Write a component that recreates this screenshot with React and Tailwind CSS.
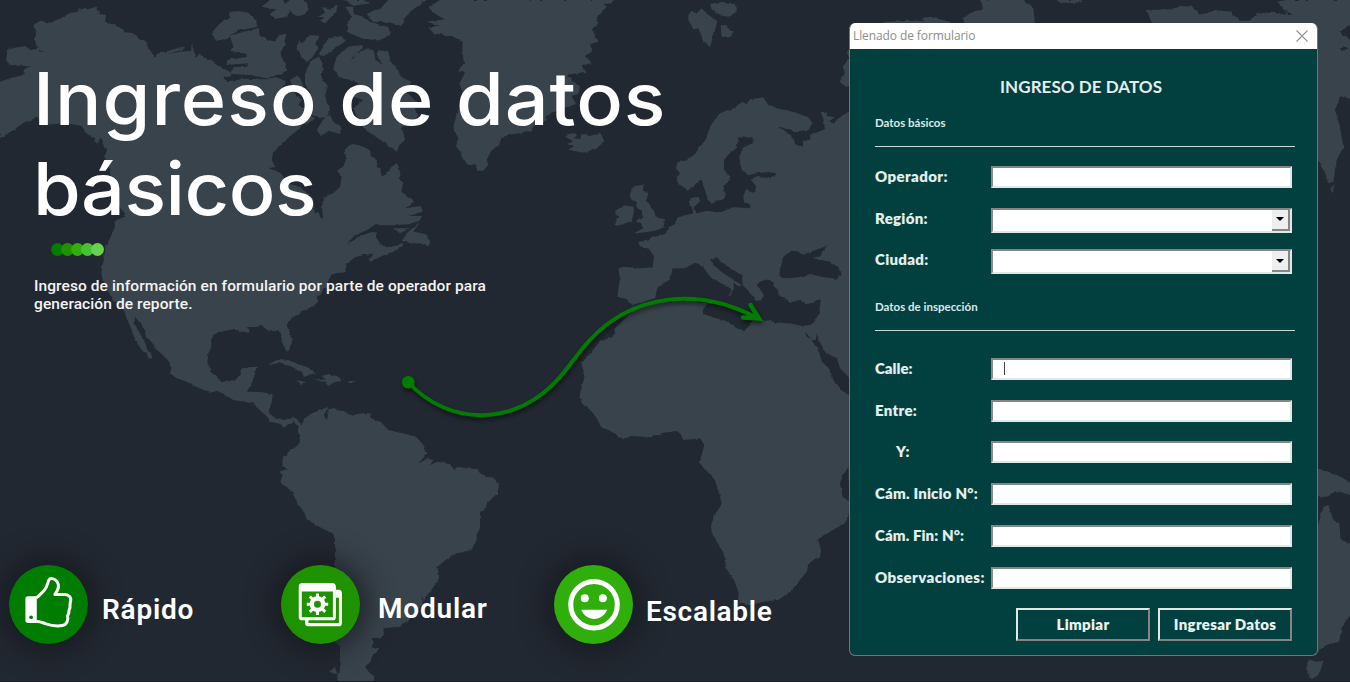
import React from "react";

const LAND = [
  // North and Central America
  "M0 245L30 235 70 225 72 205 95 200 60 196 30 195 18 180 22 160 20 150 50 142 80 138 90 150 115 146 118 155 133 155 112 148 105 120 108 100 103 75 120 62 150 68 180 56 200 45 207 40 235 35 236 25 262 28 290 20 291 32 300 33 298 42 318 45 315 65 345 76 360 85 375 97 400 100 418 118 435 125 448 148 465 172 478 160 550 140 555 147 500 163 540 155 574 152 575 131 583 158 590 172 600 160 604 170 635 180 640 190 690 215 694 228 670 234 680 244 740 236 790 238 830 232 858 246 850 262 880 275 905 300 895 315 925 335 945 360 905 375 900 385 878 402 848 428 840 438 820 455 815 480 826 500 806 505 845 520 860 550 900 560 928 585 940 600 944 640 955 636 963 655 969 655 966 620 970 590 1000 580 1020 560 1024 535 1012 512 1035 492 1038 470 1034 450 1048 436 1060 432 1090 440 1110 450 1112 468 1130 478 1132 500 1142 512 1145 530 1160 520 1175 500 1192 488 1200 515 1196 535 1210 545 1204 575 1225 590 1240 600 1245 605 1215 625 1262 618 1268 635 1225 648 1266 648 1258 662 1230 672 1185 676 1125 676 1100 690 1062 708 1040 735 1080 708 1115 696 1140 698 1130 715 1140 730 1160 742 1185 738 1210 728 1208 738 1180 755 1152 765 1112 785 1105 778 1125 760 1090 765 1065 772 1042 790 1036 810 1040 816 1010 820 990 825 984 845 985 862 970 865 965 880 950 890 955 905 940 918 905 934 880 952 864 965 862 980 870 1000 876 1030 866 1052 858 1050 845 1025 843 1000 832 990 810 995 785 978 770 980 740 982 750 995 720 995 700 988 660 995 640 1005 634 1020 634 1040 625 1060 622 1085 632 1115 650 1130 665 1147 690 1140 706 1143 718 1125 724 1105 745 1102 774 1100 764 1115 762 1130 755 1150 740 1175 780 1176 818 1183 815 1205 806 1235 820 1250 850 1260 880 1254 895 1262 903 1278 895 1283 880 1262 850 1283 842 1272 810 1265 806 1255 782 1232 760 1210 700 1200 655 1172 630 1178 592 1162 560 1145 530 1135 508 1118 515 1105 505 1082 485 1062 465 1045 462 1035 440 1010 425 975 405 950 403 970 420 1000 436 1030 442 1050 460 1072 454 1078 425 1050 405 1020 395 990 378 950 372 930 340 905 328 880 312 850 305 800 312 780 316 740 330 715 345 680 343 662 375 650 376 642 340 600 345 560 330 520 322 490 312 470 322 450 308 432 305 410 290 432 282 412 265 405 245 378 200 370 130 374 115 352 75 366 40 390 0 415Z",
  // Arctic archipelago
  "M638 95L660 70 690 50 692 35 715 33 745 38 768 62 772 80 710 92 680 118 645 122Z",
  "M690 108L730 95 775 85 780 108 800 118 825 125 838 104 858 105 855 135 838 160 850 180 862 212 840 222 800 235 750 225 690 222 700 202 740 200 745 190 680 195 682 178 740 172 740 162 690 152 700 140Z",
  "M785 20L810 0 850 0 855 12 870 0 910 0 928 20 915 42 890 50 870 30 860 52 830 55 808 45 830 28Z",
  "M950 50L975 38 970 20 990 30 1010 15 1005 40 975 70 960 62 975 52Z",
  "M1030 0L1090 0 1110 10 1060 18Z",
  "M1100 42L1125 30 1140 28 1165 0 1280 0 1240 28 1215 48 1205 78 1165 66 1120 66Z",
  "M1035 20L1060 20 1060 42 1090 50 1110 65 1165 82 1172 105 1135 122 1085 115 1040 95 1042 72 1055 50Z",
  "M890 140L895 120 908 128 930 105 960 108 945 130 955 145 935 175 920 185 905 172Z",
  "M955 165L985 115 1020 108 1038 122 1005 145 975 168Z",
  "M915 225L930 185 955 170 968 190 965 240 985 255 975 290 990 330 975 355 935 345 930 280 915 250Z",
  "M870 240L895 225 910 255 880 268Z",
  "M1000 205L1010 170 1045 140 1085 135 1090 143 1060 165 1050 190 1066 160 1100 148 1120 150 1128 180 1150 195 1132 170 1135 150 1165 155 1172 185 1190 205 1210 235 1235 245 1215 275 1250 305 1245 330 1255 345 1232 375 1205 380 1215 420 1195 438 1192 456 1130 412 1100 392 1075 360 1060 325 1090 300 1060 290 1085 265 1060 240 1020 235Z",
  "M950 390L975 350 990 345 1000 365 1025 385 1020 402 985 392 962 408Z",
  // Newfoundland
  "M1208 722L1220 700 1260 665 1240 695 1275 702 1290 725 1288 740 1260 730 1240 732Z",
  "M1180 685L1230 685 1200 700Z",
  // Greenland
  "M1285 25L1320 0 1838 0 1835 10 1810 12 1820 20 1790 50 1795 70 1778 85 1782 100 1795 125 1770 132 1776 155 1755 165 1775 190 1742 195 1760 215 1700 225 1740 262 1735 282 1715 288 1728 312 1690 325 1640 345 1640 360 1600 380 1590 395 1540 402 1505 412 1498 435 1475 450 1460 480 1465 495 1450 512 1432 512 1425 492 1410 495 1388 480 1380 450 1368 440 1375 415 1360 385 1365 360 1375 320 1392 290 1378 250 1395 220 1375 210 1392 190 1387 150 1388 125 1355 108 1300 100 1285 82 1320 78 1280 65 1335 58 1300 40Z",
  "M1200 0L1270 0 1240 20 1222 48 1200 65Z",
  // Iceland
  "M1695 410L1705 398 1730 402 1722 415 1740 418 1745 402 1770 408 1790 402 1800 398 1808 412 1812 425 1790 445 1752 460 1725 452 1705 450 1722 438 1700 432 1722 424Z",
  // Svalbard
  "M2065 45L2075 32 2090 40 2105 25 2125 45 2152 62 2145 90 2130 142 2110 120 2095 85 2080 88 2065 60Z",
  "M2130 12L2165 5 2205 12 2208 35 2185 50 2155 45 2135 28Z",
  "M2162 75L2178 78 2198 98 2190 112 2165 110Z",
  // Ireland and Great Britain
  "M1842 672L1855 655 1845 632 1875 616 1900 620 1902 635 1895 662 1870 672 1850 678Z",
  "M1888 582L1900 560 1932 553 1928 572 1945 575 1938 602 1950 615 1962 632 1968 652 1995 658 1990 682 1965 692 1912 700 1902 700 1930 685 1922 668 1908 665 1928 652 1925 632 1905 620 1910 605 1895 600Z",
  // Eurasia and Africa
  "M2560 325L2545 335 2510 360 2505 372 2485 365 2505 352 2480 348 2480 335 2462 336 2470 355 2475 388 2430 405 2432 418 2405 425 2410 440 2385 432 2380 415 2370 405 2335 378 2380 395 2425 390 2437 370 2425 352 2380 335 2330 325 2300 310 2290 292 2250 298 2240 312 2225 306 2205 322 2160 340 2145 358 2130 380 2118 418 2100 440 2085 462 2060 480 2032 488 2028 505 2040 520 2030 530 2035 552 2065 570 2085 558 2100 538 2112 560 2120 590 2135 612 2145 602 2168 600 2175 580 2170 558 2192 540 2190 525 2172 512 2172 480 2188 460 2210 445 2215 412 2258 412 2258 428 2230 445 2218 470 2225 510 2245 525 2280 518 2312 515 2328 522 2310 534 2265 530 2252 540 2268 558 2265 580 2238 570 2230 588 2232 605 2252 615 2250 625 2200 622 2160 638 2120 632 2092 640 2080 625 2100 602 2095 590 2072 595 2068 612 2080 640 2035 652 2025 672 2010 680 1998 700 1975 708 1955 710 1945 722 1915 725 1918 738 1945 745 1962 768 1958 802 1920 805 1870 800 1855 806 1860 835 1852 890 1880 898 1895 912 1900 930 1865 965 1845 985 1838 1012 1800 1022 1775 1055 1745 1088 1753 1130 1738 1190 1750 1215 1772 1230 1790 1255 1805 1282 1830 1292 1870 1318 1895 1308 1950 1312 1990 1298 2030 1293 2042 1302 2050 1320 2100 1315 2113 1335 2105 1365 2098 1385 2120 1412 2145 1440 2150 1460 2158 1482 2165 1510 2145 1545 2133 1575 2135 1597 2160 1640 2172 1665 2178 1705 2205 1745 2217 1780 2212 1795 2228 1812 2250 1815 2290 1805 2335 1800 2370 1775 2420 1715 2425 1690 2460 1672 2462 1650 2455 1618 2490 1595 2535 1570 2545 1540 2560 1500Z",
  "M2560 140L2540 155 2548 175 2528 200 2535 220 2518 245 2535 258 2560 268Z",
  // South America
  "M895 1275L905 1275 915 1255 935 1240 970 1228 985 1220 972 1245 980 1262 985 1240 982 1225 1000 1222 1015 1232 1030 1232 1050 1245 1090 1240 1115 1240 1108 1252 1130 1262 1145 1268 1165 1290 1200 1298 1230 1305 1255 1315 1270 1335 1282 1360 1255 1390 1285 1376 1300 1380 1290 1395 1312 1385 1350 1392 1362 1410 1370 1402 1430 1408 1450 1425 1485 1437 1497 1458 1492 1480 1465 1505 1450 1532 1440 1535 1440 1580 1430 1605 1430 1620 1415 1650 1370 1660 1340 1678 1312 1700 1318 1730 1300 1762 1270 1800 1265 1785 1268 1810 1240 1848 1200 1880 1150 1885 1152 1900 1145 1912 1115 1915 1120 1940 1138 1945 1115 1970 1112 1985 1095 2000 1108 2018 1125 2030 1120 2046 1010 2046 1020 2010 1020 1940 1002 1922 1010 1860 1004 1700 1005 1620 1000 1602 960 1582 920 1558 912 1535 895 1515 878 1480 860 1460 840 1450 848 1425 838 1415 862 1408 845 1395 850 1368 860 1365 870 1350 895 1335 900 1320 895 1300Z",
  // Caribbean
  "M802 1095L830 1080 860 1078 900 1095 925 1102 948 1122 912 1130 905 1115 870 1098 840 1090Z",
  "M965 1128L985 1122 1010 1128 1028 1140 1000 1148 985 1158 975 1145 945 1142 975 1138Z",
  "M888 1142L905 1142 918 1146 903 1152Z",
  "M1043 1142L1068 1144 1060 1150 1045 1148Z",
  "M988 2015L1005 2000 1012 2025Z",
  // Siberian coast above the form
  "M2890 55L2910 40 2950 25 2940 0 3070 0 3100 25 3105 75 3080 85 2890 85Z",
  "M2650 66L2720 62 2852 66 2852 90 2650 90Z",
  "M2765 55L2790 50 2850 66 2840 80 2790 80Z",
  "M3170 0L3250 0 3230 8 3180 8Z",
  "M3440 30L3520 28 3540 18 3580 20 3600 45 3650 30 3690 35 3720 62 3750 62 3770 42 3820 35 3860 45 3850 28 3830 5 3860 0 4070 0 4070 65 4020 95 4050 120 4070 300 4020 290 4005 330 4020 380 4030 440 4010 480 4000 545 3985 550 3975 520 3958 490 3950 470 3940 300 3940 80 3460 80Z",
  "M3990 570L4005 550 3995 580Z",
  // Australia and New Guinea
  "M3950 1405L4000 1420 4030 1435 4070 1460 4070 1492 4020 1475 3995 1480 3980 1492 3950 1488 3940 1440Z",
  "M3950 1590L3970 1520 3985 1515 4000 1560 4018 1570 4022 1620 4070 1635 4070 1820 4025 1880 4018 1925 3980 1935 3950 1955 3940 1955Z",
  "M3922 1978L3950 1985 3972 1982 3955 2025 3935 2038 3922 2020Z",
];

const WATER = [
  // Mediterranean and Adriatic
  "M1895 915L1930 905 1965 895 1972 865 2010 838 2018 805 2055 805 2085 788 2105 795 2130 830 2160 848 2185 860 2195 872 2185 885 2190 888 2202 865 2200 848 2220 860 2225 855 2170 820 2140 795 2130 778 2150 770 2165 788 2200 810 2225 825 2228 852 2245 872 2255 885 2265 900 2282 902 2292 885 2278 865 2270 850 2300 838 2322 845 2320 858 2335 870 2335 885 2350 895 2370 908 2400 900 2420 910 2462 898 2458 935 2445 965 2430 975 2405 978 2370 970 2330 968 2285 958 2262 958 2235 992 2210 985 2185 965 2150 955 2110 942 2108 930 2122 912 2090 905 1990 905 1900 925Z",
  // Black Sea
  "M2338 822L2342 800 2350 770 2375 752 2395 755 2408 765 2440 752 2480 738 2462 765 2440 775 2490 785 2520 805 2525 825 2510 836 2470 832 2430 822 2395 832 2350 836Z",
  // Red Sea
  "M2435 1020L2455 1020 2480 1060 2510 1075 2520 1105 2550 1135 2550 1190 2530 1175 2500 1140 2490 1108 2465 1085 2462 1065Z",
  "M2415 995L2435 1018 2420 1010ZM2450 1000L2455 1020 2447 1020Z",
  "M2545 1400L2530 1425 2520 1448 2528 1490 2548 1505Z",
  // Gulf of Saint Lawrence
  "M1130 690L1160 690 1180 705 1170 735 1150 738 1132 718Z",
  // Inlets at the east edge
  "M4020 145L4040 140 4042 150 4025 152ZM3850 28L3880 45 3865 45Z",
];

function WorldMap() {
  return (
    <svg className="absolute inset-0 h-[682px] w-[1350px]" viewBox="0 0 4050 2046" aria-hidden="true">
      <defs>
        <filter
          id="coast"
          filterUnits="userSpaceOnUse"
          x="-30"
          y="-30"
          width="4110"
          height="2106"
          colorInterpolationFilters="sRGB"
        >
          <feTurbulence type="fractalNoise" baseFrequency="0.06" numOctaves="2" seed="4" />
          <feDisplacementMap in="SourceGraphic" scale="9" xChannelSelector="R" yChannelSelector="G" />
          <feGaussianBlur stdDeviation="1.1" />
        </filter>
      </defs>
      <g filter="url(#coast)">
        {LAND.map((d) => (
          <path key={d} d={d} fill="#39434b" />
        ))}
        {WATER.map((d) => (
          <path key={d} d={d} fill="#222831" />
        ))}
      </g>
    </svg>
  );
}

function RouteArrow() {
  return (
    <svg
      className="absolute left-[390px] top-[285px] h-[145px] w-[385px] drop-shadow-[1px_3px_2px_rgba(0,0,0,0.5)]"
      viewBox="390 285 385 145"
      fill="none"
      stroke="#007c00"
      strokeWidth="4"
      aria-hidden="true"
    >
      <circle cx="408.3" cy="382.3" r="6.3" fill="#007c00" stroke="none" />
      <path d="M408 382C450 428 518 426 560 377C571 364 579 352 589 341C632 294 698 286 757 318" />
      <path d="M750.500 305L759 318.500L743 317.500" strokeLinecap="round" strokeWidth="4.500" />
    </svg>
  );
}

function ThumbIcon() {
  return (
    <svg className="h-[79px] w-[79px]" viewBox="0 0 236 236" fill="none" aria-hidden="true">
      <path d="M57 93H83V173H57Q49 173 49 165V101Q49 93 57 93Z" fill="#fff" />
      <circle cx="66" cy="156" r="5.500" fill="#007c00" />
      <path
        d="M82 98C92 91 98 83 104 77C115 65 115 55 119 45C123 37 136 40 144 50C152 62 147 75 137 88H163C178 87 187 97 184 108C182 114 183 117 182 120C184 127 181 132 179 136C180 143 177 147 175 152C178 163 173 180 159 181C147 183 125 181 108 175C97 171 91 168 82 169"
        stroke="#fff"
        strokeWidth="9"
        strokeLinejoin="round"
      />
    </svg>
  );
}

function ModulesIcon() {
  return (
    <svg className="h-[79px] w-[79px]" viewBox="0 0 236 236" fill="none" aria-hidden="true">
      <path d="M164 74H172Q182 74 182 84V173Q182 183 172 183H82Q72 183 72 173V164H82V173H173V98H164Z" fill="#fff" />
      <path
        fillRule="evenodd"
        d="M64 54H153Q164 54 164 65V155Q164 165 154 165H63Q53 165 53 155V65Q53 54 64 54ZM62 79V156H155V79Z"
        fill="#fff"
      />
      <g stroke="#fff" strokeWidth="9">
        <path d="M109 85V100M109 134V149M77 117H92M126 117H141M86 94L97 105M121 129L132 140M132 94L121 105M97 129L86 140" />
        <circle cx="109" cy="117" r="17" strokeWidth="13" />
      </g>
    </svg>
  );
}

function SmileIcon() {
  return (
    <svg className="h-[79px] w-[79px]" viewBox="0 0 236 236" fill="none" aria-hidden="true">
      <circle cx="119.500" cy="118.500" r="69.500" stroke="#fff" strokeWidth="15" />
      <circle cx="92" cy="99.500" r="12" fill="#fff" />
      <circle cx="146" cy="99.500" r="12" fill="#fff" />
      <path d="M81 134H159C151 152 137 161 120 161S89 152 81 134Z" fill="#fff" />
    </svg>
  );
}

function Feature({ icon, color, label, labelClass, className }) {
  return (
    <div className={`flex shrink-0 ${className}`}>
      <div className={`h-[79px] w-[79px] shrink-0 rounded-full shadow-[0_0_26px_9px_rgba(18,18,26,0.6)] ${color}`}>{icon}</div>
      <span className={`font-['Roboto'] text-[28px] font-semibold leading-[33px] text-white ${labelClass}`}>{label}</span>
    </div>
  );
}

const FIELD = "w-[301px] border-2 border-b-[#dfe9e6] border-l-[#8b8b8b] border-r-[#dfe9e6] border-t-[#858585] bg-white";
const LABEL = "w-[116px] shrink-0 whitespace-pre font-['Lato'] text-[15px] font-extrabold leading-[21px] text-[#e4eeec]";

function TextRow({ label, labelClass, caret }) {
  return (
    <div className="flex h-[41.7px]">
      <div className={`${LABEL} ${labelClass}`}>{label}</div>
      <div className={`h-[22px] ${FIELD}`}>{caret && <div className="ml-[11px] mt-[2px] h-[13px] w-px bg-[#444]" />}</div>
    </div>
  );
}

function SelectRow({ label, labelClass }) {
  return (
    <div className="flex h-[41.7px]">
      <div className={`${LABEL} ${labelClass}`}>{label}</div>
      <div className={`flex h-[25px] justify-end ${FIELD}`}>
        <div className="flex h-[21px] w-[18px] items-center justify-center border-b-2 border-r-2 border-[#858585] bg-[#eee]">
          <svg className="h-[4px] w-[8px]" viewBox="0 0 8 4" aria-hidden="true">
            <path d="M0 0H8L4 4Z" fill="#000" />
          </svg>
        </div>
      </div>
    </div>
  );
}

function SectionTitle({ children, className }) {
  return (
    <div className={`w-[420px] border-b border-[#c9d9d7] font-['Lato'] text-[11.5px] font-bold leading-4 text-[#dce8e6] ${className}`}>
      {children}
    </div>
  );
}

const BUTTON =
  "h-[33px] border-2 border-b-[#858585] border-l-[#dfe9e6] border-r-[#858585] border-t-[#dfe9e6] font-['Lato'] text-[15px] font-extrabold text-[#e9f2f0]";

function FormWindow() {
  return (
    <section className="flex h-[633px] w-[469px] flex-col overflow-hidden rounded-[6px] border border-t-0 border-[#6d7678] bg-[#024040]">
      <header className="flex h-[26px] shrink-0 items-center justify-between bg-white pl-[3px] pr-[9px]">
        <span className="font-['Open_Sans'] text-[12px] tracking-[-0.1px] text-[#8d8d8d]">Llenado de formulario</span>
        <svg className="h-[12px] w-[12px]" viewBox="0 0 12 12" stroke="#929292" strokeWidth="1.100" aria-hidden="true">
          <path d="M.5.5L11.500 11.500M11.500.5L.5 11.500" />
        </svg>
      </header>
      <div className="flex flex-col pl-[25px]">
        <h2 className="mt-[27px] self-start pl-[125px] font-['Lato'] text-[17px] font-bold leading-[22px] tracking-[0.05px] text-[#e4eeec]">INGRESO DE DATOS</h2>
        <SectionTitle className="mt-[17px] h-[32px]">Datos básicos</SectionTitle>
        <div className="mt-[19px]">
          <TextRow label="Operador:" labelClass="tracking-[0.4px]" />
          <SelectRow label="Región:" labelClass="tracking-[0.3px]" />
          <SelectRow label="Ciudad:" labelClass="tracking-[0.3px]" />
        </div>
        <SectionTitle className="mt-[8px] h-[32px]">Datos de inspección</SectionTitle>
        <div className="mt-[27px]">
          <TextRow label="Calle:" labelClass="tracking-[0px]" caret />
          <TextRow label="Entre:" labelClass="tracking-[0.3px]" />
          <TextRow label="Y:" labelClass="pl-[21px]" />
          <TextRow label="Cám. Inicio N°:" labelClass="tracking-[0.2px]" />
          <TextRow label="Cám. Fin: N°:" labelClass="tracking-[0.1px]" />
          <TextRow label="Observaciones:" labelClass="tracking-[0.4px]" />
        </div>
        <div className="flex gap-[8px] pl-[141px]">
          <button className={`w-[134px] tracking-[0.3px] ${BUTTON}`}>Limpiar</button>
          <button className={`w-[134px] tracking-[0.3px] ${BUTTON}`}>Ingresar Datos</button>
        </div>
      </div>
    </section>
  );
}

export default function App() {
  return (
    <main className="relative flex h-[682px] w-[1350px] overflow-hidden border-b border-[#211b2c] bg-[#222831]">
      <WorldMap />
      <RouteArrow />
      <div className="relative flex w-[849px] shrink-0 flex-col">
        <h1 className="mt-[54px] pl-[33px] font-['Inter'] text-[73px] font-medium leading-[90px] text-white">
          <span className="block origin-left scale-x-[1.06] whitespace-nowrap tracking-[0.9px]">Ingreso de datos</span>
          <span className="block origin-left scale-x-[1.06] whitespace-nowrap tracking-[-0.5px]">básicos</span>
        </h1>
        <div className="mt-[9px] flex pl-[51px]">
          <i className="h-[13px] w-[13px] rounded-full bg-[#007c00]" />
          <i className="-ml-[3px] h-[13px] w-[13px] rounded-full bg-[#1f9200]" />
          <i className="-ml-[3px] h-[13px] w-[13px] rounded-full bg-[#2fae0c]" />
          <i className="-ml-[3px] h-[13px] w-[13px] rounded-full bg-[#48c034]" />
          <i className="-ml-[3px] h-[13px] w-[13px] rounded-full bg-[#66d24e]" />
        </div>
        <p className="mt-[21px] pl-[34px] font-['Roboto'] text-[15.500px] font-medium leading-[18px] tracking-[0.09px] text-[#f4f4f4]">
          Ingreso de información en formulario por parte de operador para
          <br />
          generación de reporte.
        </p>
        <div className="mt-[252px] flex pl-[9px]">
          <Feature className="w-[272px]" color="bg-[#007c00]" icon={<ThumbIcon />} label="Rápido" labelClass="ml-[14px] mt-[28px] tracking-[0.8px]" />
          <Feature className="w-[273px]" color="bg-[#1f9200]" icon={<ModulesIcon />} label="Modular" labelClass="ml-[18px] mt-[27px] tracking-[0.8px]" />
          <Feature className="w-[260px]" color="bg-[#2fae0c]" icon={<SmileIcon />} label="Escalable" labelClass="ml-[13px] mt-[30px] tracking-[0.7px]" />
        </div>
      </div>
      <div className="relative mt-[23px]">
        <FormWindow />
      </div>
    </main>
  );
}
